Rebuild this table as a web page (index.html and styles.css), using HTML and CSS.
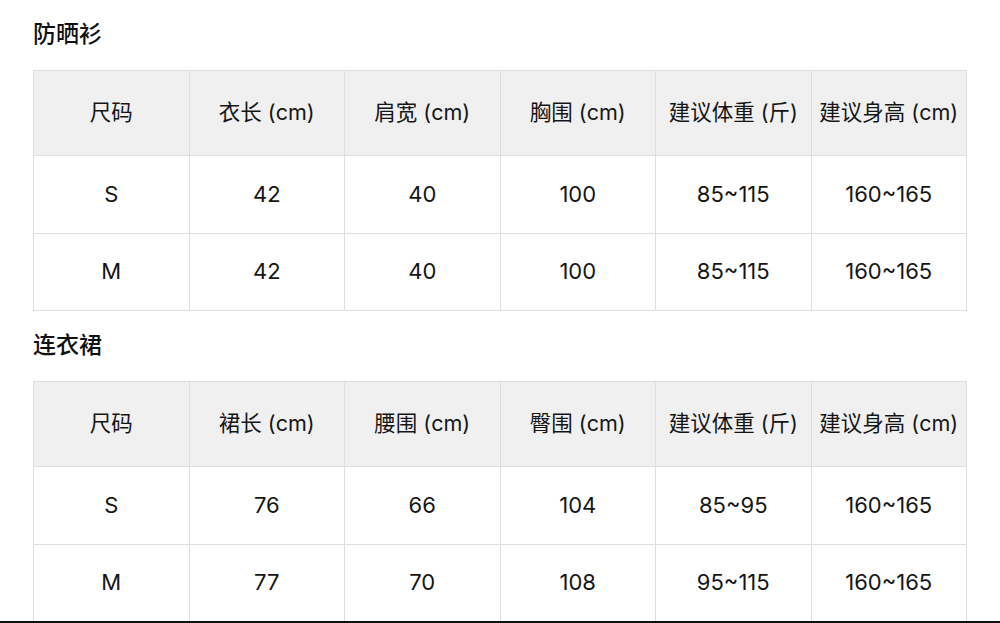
FILE: index.html
```html
<!DOCTYPE html>
<html lang="zh">
<head>
<meta charset="utf-8">
<link rel="stylesheet" href="styles.css">
</head>
<body>
<div class="page">
  <section class="section">
    <h2 class="title">防晒衫</h2>
    <table class="size-table">
      <thead>
        <tr><th>尺码</th><th>衣长 (cm)</th><th>肩宽 (cm)</th><th>胸围 (cm)</th><th>建议体重 (斤)</th><th>建议身高 (cm)</th></tr>
      </thead>
      <tbody>
        <tr><td>S</td><td>42</td><td>40</td><td>100</td><td>85~115</td><td>160~165</td></tr>
        <tr><td>M</td><td>42</td><td>40</td><td>100</td><td>85~115</td><td>160~165</td></tr>
      </tbody>
    </table>
  </section>
  <section class="section">
    <h2 class="title">连衣裙</h2>
    <table class="size-table">
      <thead>
        <tr><th>尺码</th><th>裙长 (cm)</th><th>腰围 (cm)</th><th>臀围 (cm)</th><th>建议体重 (斤)</th><th>建议身高 (cm)</th></tr>
      </thead>
      <tbody>
        <tr><td>S</td><td>76</td><td>66</td><td>104</td><td>85~95</td><td>160~165</td></tr>
        <tr><td>M</td><td>77</td><td>70</td><td>108</td><td>95~115</td><td>160~165</td></tr>
      </tbody>
    </table>
  </section>
</div>
<div class="edge"></div>
</body>
</html>
```

FILE: styles.css
```css
html, body {
  margin: 0;
  padding: 0;
  background: #fff;
}
body {
  font-family: "Inter", "Noto Sans CJK SC", sans-serif;
  color: #111;
  overflow: hidden;
}
.page {
  padding: 17px 0 0 33px;
}
.section + .section {
  margin-top: 17px;
}
.title {
  margin: 0 0 23px 0;
  font-family: "Noto Sans CJK SC", sans-serif;
  font-size: 23px;
  line-height: 30px;
  font-weight: 500;
  color: #111;
}
.size-table {
  border-collapse: collapse;
  table-layout: fixed;
  width: 934px;
}
.size-table th,
.size-table td {
  border: 1px solid #dedede;
  text-align: center;
  font-weight: 400;
  padding: 0;
  color: #151515;
}
.size-table th {
  background: #f0f0f0;
  height: 79px;
  padding-bottom: 5px;
  font-size: 21.5px;
}
.size-table td {
  height: 75px;
  padding-bottom: 2px;
  font-size: 22px;
}
.size-table tbody tr:last-child td {
  height: 74px;
}
.edge {
  position: fixed;
  left: 0;
  right: 0;
  bottom: 0;
  height: 2px;
  background: #111;
}
```
